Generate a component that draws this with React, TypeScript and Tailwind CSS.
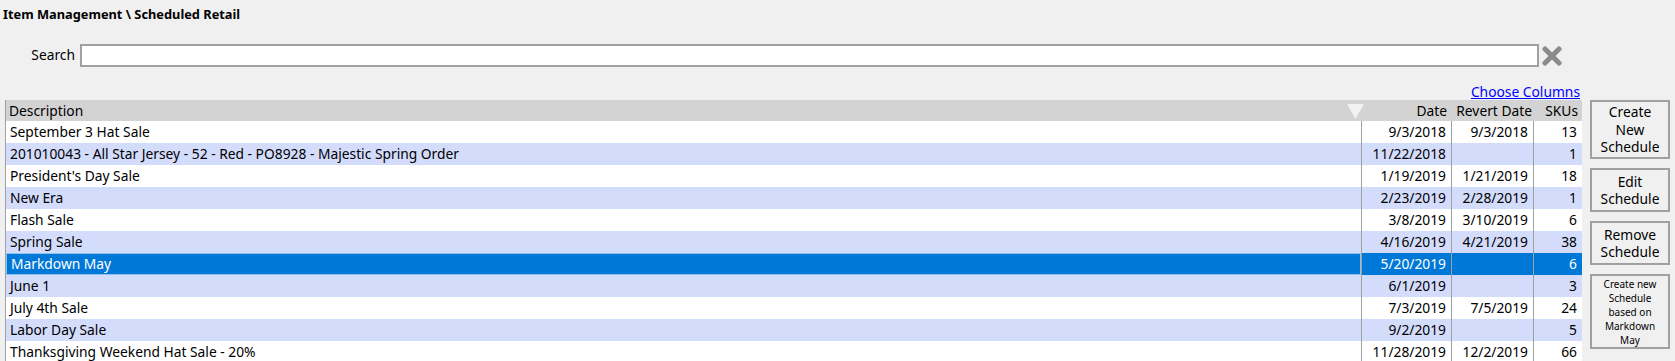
import React from 'react';

type Row = { desc: string; date: string; revert: string; skus: number };

const rows: Row[] = [
  { desc: 'September 3 Hat Sale', date: '9/3/2018', revert: '9/3/2018', skus: 13 },
  { desc: '201010043 - All Star Jersey - 52 - Red - PO8928 - Majestic Spring Order', date: '11/22/2018', revert: '', skus: 1 },
  { desc: "President's Day Sale", date: '1/19/2019', revert: '1/21/2019', skus: 18 },
  { desc: 'New Era', date: '2/23/2019', revert: '2/28/2019', skus: 1 },
  { desc: 'Flash Sale', date: '3/8/2019', revert: '3/10/2019', skus: 6 },
  { desc: 'Spring Sale', date: '4/16/2019', revert: '4/21/2019', skus: 38 },
  { desc: 'Markdown May', date: '5/20/2019', revert: '', skus: 6 },
  { desc: 'June 1', date: '6/1/2019', revert: '', skus: 3 },
  { desc: 'July 4th Sale', date: '7/3/2019', revert: '7/5/2019', skus: 24 },
  { desc: 'Labor Day Sale', date: '9/2/2019', revert: '', skus: 5 },
  { desc: 'Thanksgiving Weekend Hat Sale - 20%', date: '11/28/2019', revert: '12/2/2019', skus: 66 },
];

const SELECTED = 6;

const ClearIcon = () => (
  <svg width="20" height="20" viewBox="0 0 20 20">
    <path d="M3 3 L17 17 M17 3 L3 17" stroke="#8a8a8a" strokeWidth="5" strokeLinecap="round" />
  </svg>
);

export default function App() {
  return (
    <div className="w-[1675px] h-[361px] overflow-hidden bg-[#f0f0f0] text-[13.8px] text-black font-['Noto_Sans',sans-serif]">
      <div className="pl-[3px] pt-[4px] h-[24px] font-bold text-[12.8px] leading-[20px]">Item Management \ Scheduled Retail</div>

      <div className="flex items-center h-[23px] mt-[20px]">
        <span className="w-[80px] pr-[5px] text-right">Search</span>
        <div className="w-[1459px] h-[23px] border-2 border-[#a0a0a0] bg-white" />
        <div className="ml-[3px] flex items-center"><ClearIcon /></div>
      </div>

      <div className="flex justify-end w-[1580px] mt-[16px] h-[17px] leading-[17px]">
        <span className="text-[#0000ff] underline">Choose Columns</span>
      </div>

      <div className="flex">
        <div className="ml-[5px] w-[1577px] border-l border-[#a0a0a0]">
          <div className="flex h-[21px] leading-[21px] bg-[#d3d3d3]">
            <div className="w-[1356px] pl-[3px] relative">
              Description
              <svg className="absolute right-[-2px] top-[4px]" width="17" height="15" viewBox="0 0 17 15">
                <path d="M0 0 H17 L8.5 15 Z" fill="#f2f2f2" />
              </svg>
            </div>
            <div className="w-[90px] pr-[5px] text-right">Date</div>
            <div className="w-[84px] pr-[4px] text-right">Revert Date</div>
            <div className="w-[46px] pr-[4px] text-right">SKUs</div>
          </div>
          {rows.map((r, i) => {
            const sel = i === SELECTED;
            const bg = sel ? 'bg-[#0078d7] text-white' : i % 2 === 0 ? 'bg-white' : 'bg-[#d4dcfc]';
            return (
              <div key={i} className={`flex h-[22px] leading-[22px] ${bg}`}>
                <div className={`w-[1355px] pl-[4px] ${sel ? 'border border-[#8ec5f3] pl-[3px] leading-[20px]' : ''}`}>{r.desc}</div>
                <div className="w-[90px] pr-[5px] text-right border-l border-[#a0a0a0]">{r.date}</div>
                <div className="w-[82px] pr-[5px] text-right border-l border-[#a0a0a0]">{r.revert}</div>
                <div className="w-[49px] pr-[5px] text-right border-l border-[#a0a0a0]">{r.skus}</div>
              </div>
            );
          })}
        </div>

        <div className="ml-[8px] w-[80px] flex flex-col gap-[9px]">
          <button className="h-[59px] border-2 border-[#a0a0a0] bg-[#f0f0f0] leading-[17.5px] text-center">Create<br />New<br />Schedule</button>
          <button className="h-[44px] border-2 border-[#a0a0a0] bg-[#f0f0f0] leading-[17.5px] text-center">Edit<br />Schedule</button>
          <button className="h-[44px] border-2 border-[#a0a0a0] bg-[#f0f0f0] leading-[17.5px] text-center">Remove<br />Schedule</button>
          <button className="h-[75px] border-2 border-[#a0a0a0] bg-[#f0f0f0] text-[10px] leading-[14px] text-center">Create new<br />Schedule<br />based on<br />Markdown<br />May</button>
        </div>
      </div>
    </div>
  );
}
